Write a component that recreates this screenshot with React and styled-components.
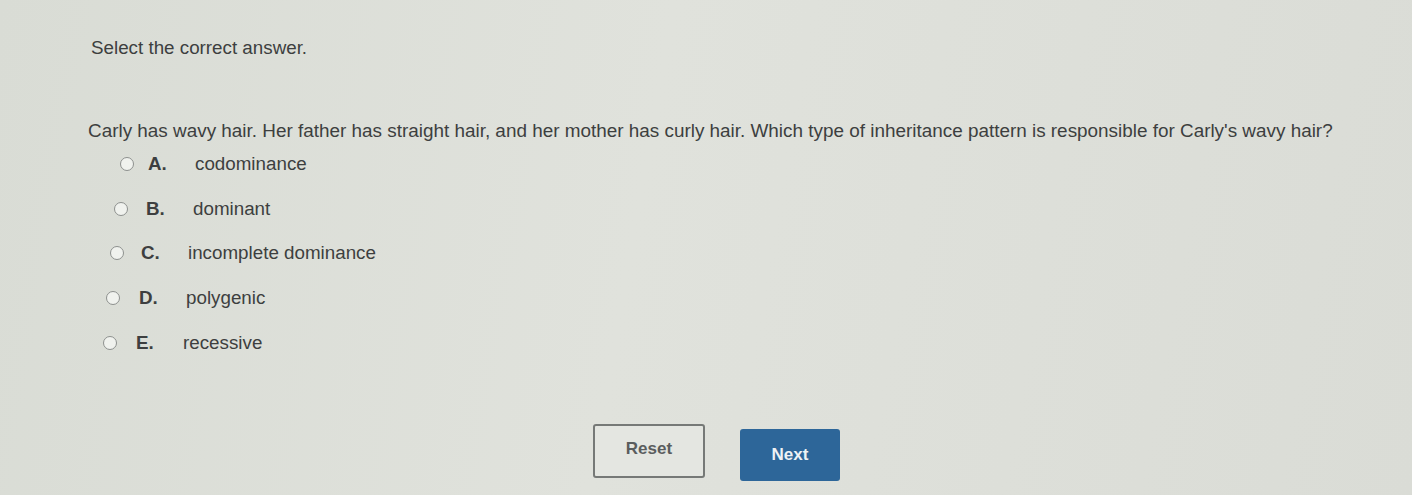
import React from "react";
import styled, { createGlobalStyle } from "styled-components";

const Global = createGlobalStyle`
  html, body { margin: 0; padding: 0; }
  body {
    width: 1412px; height: 495px; overflow: hidden;
    background: #dcdfd9;
    font-family: "Liberation Sans", Arial, sans-serif;
    color: #3d3f3f;
  }
`;

const Page = styled.div`
  width: 1412px;
  height: 495px;
  box-sizing: border-box;
  padding: 37px 0 0 90px;
  background: linear-gradient(100deg, #d9dcd5 0%, #e0e2dc 45%, #dadcd6 100%);
  display: flex;
  flex-direction: column;
`;

const Instruction = styled.div`
  font-size: 18.8px;
  line-height: 22px;
  margin-left: 1px;
`;

const Question = styled.div`
  margin-top: 61px;
  font-size: 18.9px;
  line-height: 22px;
  margin-left: -2px;
  white-space: nowrap;
`;

const Options = styled.div`
  margin-top: 11px;
  display: flex;
  flex-direction: column;
  gap: 22.7px;
`;

const Option = styled.label`
  display: flex;
  align-items: center;
  height: 22px;
  font-size: 18.8px;
  margin-left: ${(p) => p.$indent}px;
`;

const Radio = styled.span`
  width: 14px;
  height: 14px;
  flex: none;
  border: 1.5px solid #8d908e;
  border-radius: 50%;
  background: #f0f2ee;
  box-sizing: border-box;
  margin-right: ${(p) => p.$gap}px;
`;

const Letter = styled.span`
  font-weight: bold;
  width: 47px;
  flex: none;
  color: #3d3f40;
`;

const Text = styled.span``;

const Buttons = styled.div`
  margin-top: 70px;
  display: flex;
  align-items: flex-start;
  gap: 35px;
  margin-left: 503px;
`;

const Button = styled.button`
  font-family: "Liberation Sans", Arial, sans-serif;
  font-size: 17px;
  font-weight: bold;
  border-radius: 3px;
  box-sizing: border-box;
  cursor: pointer;
`;

const ResetButton = styled(Button)`
  width: 112px;
  height: 54px;
  background: #e4e6e1;
  border: 2px solid #767977;
  color: #5a5d5e;
  padding-bottom: 4px;
`;

const NextButton = styled(Button)`
  margin-top: 5px;
  width: 100px;
  height: 52px;
  background: #2d6699;
  border: none;
  color: #eef2f5;
`;

const opts = [
  ["A.", "codominance", 30, 14],
  ["B.", "dominant", 24, 18],
  ["C.", "incomplete dominance", 20, 17],
  ["D.", "polygenic", 16, 19],
  ["E.", "recessive", 13, 19],
];

export default function App() {
  return (
    <>
      <Global />
      <Page>
        <Instruction>Select the correct answer.</Instruction>
        <Question>
          Carly has wavy hair. Her father has straight hair, and her mother has curly hair. Which type of
          inheritance pattern is responsible for Carly's wavy hair?
        </Question>
        <Options>
          {opts.map(([l, t, i, g]) => (
            <Option key={l} $indent={i}>
              <Radio $gap={g} />
              <Letter>{l}</Letter>
              <Text>{t}</Text>
            </Option>
          ))}
        </Options>
        <Buttons>
          <ResetButton>Reset</ResetButton>
          <NextButton>Next</NextButton>
        </Buttons>
      </Page>
    </>
  );
}
